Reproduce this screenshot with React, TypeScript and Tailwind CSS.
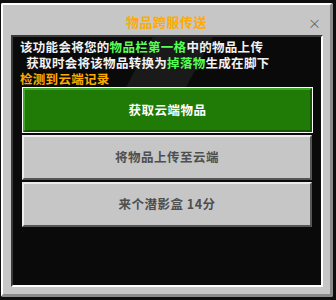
import React from "react";

const font = { fontFamily: '"Noto Sans CJK SC", "Noto Sans", sans-serif' };

function GrayButton({ label }: { label: string }) {
  return (
    <div className="h-[45px] w-[290px] bg-[#c6c6c6] border-t-2 border-l-2 border-[#ececec] border-b-2 border-r-2 border-b-[#555555] border-r-[#555555] flex items-center justify-center text-[12.5px] font-bold text-[#4e4e4e] tracking-[0.5px]">
      {label}
    </div>
  );
}

export default function App() {
  return (
    <div className="w-[336px] h-[300px] bg-[#0e0e0e] pt-[3px] pl-[1px]" style={font}>
      <div className="w-[332px] h-[294px] bg-[#c6c6c6] border-t-2 border-l-2 border-white border-b-[3px] border-r-[3px] border-b-[#8b8b8b] border-r-[#8b8b8b] rounded-[2px] flex flex-col">
        <div className="relative h-[30px] pt-[4px] flex items-center justify-center">
          <span className="text-[13px] font-bold text-[#ffaa00] tracking-[0.5px]">物品跨服传送</span>
          <span className="absolute right-[9px] top-[11px] text-[13px] leading-none text-[#666666]">×</span>
        </div>
        <div className="relative ml-[8px] w-[312px] h-[252px] bg-[#0a0a0a] border-t-2 border-l-2 border-[#3a3a3a] border-b-2 border-r-2 border-b-white border-r-white overflow-hidden">
          <svg className="absolute inset-0" width="312" height="252">
            <polygon points="140,0 200,0 172,52 112,52" fill="#1c1c1c" opacity="0.9" />
          </svg>
          <div className="relative pl-[7px] pt-[2px] text-[12.5px] leading-[16px] font-bold text-[#f2f2f2] tracking-[0.3px]">
            <div>
              该功能会将您的<span className="text-[#55ff55]">物品栏第一格</span>中的物品上传
            </div>
            <div>
              &nbsp;&nbsp;获取时会将该物品转换为<span className="text-[#55ff55]">掉落物</span>生成在脚下
            </div>
            <div className="text-[#ffaa00]">检测到云端记录</div>
          </div>
          <div className="relative ml-[9px] flex flex-col gap-[2px]">
            <div className="h-[46px] w-[291px] border border-white bg-[#1f7a06] flex items-center justify-center">
              <div className="w-full h-full border-t-2 border-l-2 border-[#3fa82a] border-b-2 border-r-2 border-b-[#145204] border-r-[#145204] flex items-center justify-center text-[12.5px] font-bold text-white tracking-[0.5px]">
                获取云端物品
              </div>
            </div>
            <GrayButton label="将物品上传至云端" />
            <GrayButton label="来个潜影盒 14分" />
          </div>
        </div>
      </div>
    </div>
  );
}
